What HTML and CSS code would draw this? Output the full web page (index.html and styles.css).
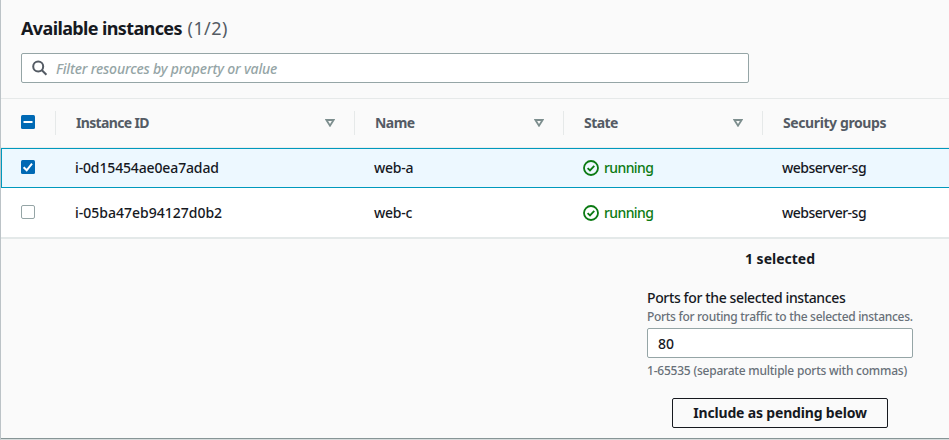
FILE: index.html
```html
<!DOCTYPE html>
<html lang="en">
<head>
<meta charset="utf-8">
<title>Available instances</title>
<link rel="stylesheet" href="styles.css">
</head>
<body>
<main class="panel">
  <header class="panel-header">
    <h2 class="title"><span class="title-text">Available instances</span> <span class="count">(1/2)</span></h2>
    <div class="filter">
      <svg class="search-icon" viewBox="0 0 16 16"><circle cx="6.2" cy="6.6" r="5"/><path d="M9.9 10.3 14.4 14.8"/></svg>
      <span class="placeholder">Filter resources by property or value</span>
    </div>
  </header>
  <section class="table">
    <div class="row head">
      <div class="cell check"><svg class="box" viewBox="0 0 14 14"><rect class="on" width="14" height="14" rx="1.5"/><path class="mark" d="M2.5 7h9"/></svg></div>
      <div class="cell"><span class="label id-label">Instance ID</span><svg class="sort" viewBox="0 0 10 8"><path d="M1.4 1h7.2L5 6.7z"/></svg></div>
      <div class="cell"><span class="label">Name</span><svg class="sort" viewBox="0 0 10 8"><path d="M1.4 1h7.2L5 6.7z"/></svg></div>
      <div class="cell"><span class="label">State</span><svg class="sort" viewBox="0 0 10 8"><path d="M1.4 1h7.2L5 6.7z"/></svg></div>
      <div class="cell"><span class="label sg-label">Security groups</span></div>
    </div>
    <div class="row selected">
      <div class="cell check"><svg class="box" viewBox="0 0 14 14"><rect class="on" width="14" height="14" rx="1.5"/><path class="mark" d="M2.6 7.2 5.7 10.3 11 3.6"/></svg></div>
      <div class="cell"><span class="id">i-0d15454ae0ea7adad</span></div>
      <div class="cell"><span class="name">web-a</span></div>
      <div class="cell status"><svg class="ok" viewBox="0 0 16 16"><circle cx="8" cy="8" r="7"/><path d="m4.6 8.1 2.4 2.3 4.3-4.5"/></svg><span class="running">running</span></div>
      <div class="cell"><span class="sg">webserver-sg</span></div>
    </div>
    <div class="row last">
      <div class="cell check"><svg class="box" viewBox="0 0 14 14"><rect class="off" x=".5" y=".5" width="13" height="13" rx="1.5"/></svg></div>
      <div class="cell"><span class="id id-wide">i-05ba47eb94127d0b2</span></div>
      <div class="cell"><span class="name">web-c</span></div>
      <div class="cell status"><svg class="ok" viewBox="0 0 16 16"><circle cx="8" cy="8" r="7"/><path d="m4.6 8.1 2.4 2.3 4.3-4.5"/></svg><span class="running">running</span></div>
      <div class="cell"><span class="sg">webserver-sg</span></div>
    </div>
  </section>
  <footer class="footer">
    <div class="form">
      <div class="selected-count">1 selected</div>
      <div class="field-label">Ports for the selected instances</div>
      <div class="hint">Ports for routing traffic to the selected instances.</div>
      <div class="input"><span>80</span></div>
      <div class="constraint">1-65535 (separate multiple ports with commas)</div>
      <button class="button">Include as pending below</button>
    </div>
  </footer>
</main>
</body>
</html>
```
FILE: styles.css
```css
* { box-sizing: border-box; }
body {
  margin: 0;
  width: 949px;
  height: 440px;
  overflow: hidden;
  font: 500 14px/20px "Noto Sans", "Open Sans", sans-serif;
  color: #16191f;
  background: #fafafa;
}
svg { display: block; flex: none; fill: none; }
span, .selected-count, .field-label, .hint, .constraint { white-space: nowrap; }
.panel {
  height: 440px;
  display: flex;
  flex-direction: column;
  border-left: 1px solid #bcc3c7;
  border-bottom: 1px solid #d5dbdb;
}
.panel-header { height: 99px; padding: 16px 20px 0; border-bottom: 1px solid #e6e9e9; }
.title { margin: 0 0 13px; font-size: 18px; line-height: 24px; font-weight: 700; }
.title-text { letter-spacing: -0.62px; }
.count { margin-left: 1px; font-weight: 400; letter-spacing: 0.4px; color: #545b64; }
.filter {
  width: 728px;
  height: 30px;
  display: flex;
  align-items: center;
  padding-left: 10px;
  background: #fff;
  border: 1px solid #95a5a6;
  border-radius: 2px;
}
.search-icon { width: 16px; height: 16px; stroke: #545b64; stroke-width: 2; }
.placeholder { margin: 2px 0 0 8px; font-style: italic; color: #95a5a6; letter-spacing: -0.17px; }
.table { height: 140px; }
.row { display: grid; grid-template-columns: 54px 299px 209px 199px 1fr; align-items: center; }
.cell { display: flex; align-items: center; padding-left: 20px; }
.check { padding: 0 0 2px 20px; }
.head { height: 49px; color: #545b64; font-weight: 700; border-bottom: 1px solid #eaeded; }
.head .cell { height: 24px; padding-left: 20px; border-left: 1px solid #e6e9e9; }
.head .check { border-left: 0; }
.label { letter-spacing: -0.55px; }
.id-label { letter-spacing: -0.65px; }
.sg-label { letter-spacing: -0.4px; }
.sort { width: 10px; height: 8px; margin: 0 19px 0 auto; stroke: #7d8e8e; stroke-width: 1.8; }
.box { width: 14px; height: 14px; }
.on { fill: #0069b4; }
.off { fill: #fff; stroke: #95a5a6; }
.mark { stroke: #fff; stroke-width: 2; }
.selected {
  height: 40px;
  background: #edf8ff;
  border: 1px solid #0099bd;
  border-right: 0;
  grid-template-columns: 53px 299px 209px 199px 1fr;
}
.selected .check { padding-left: 20px; margin-left: -1px; }
.last { height: 51px; background: #fff; border-bottom: 2px solid #e4e9e9; }
.id { letter-spacing: -0.14px; }
.id-wide { letter-spacing: 0; }
.name { letter-spacing: -0.25px; }
.sg { letter-spacing: -0.5px; }
.status { color: #0b7a13; }
.running { letter-spacing: -0.6px; }
.ok { width: 16px; height: 16px; margin-right: 5px; stroke: #0b7a13; stroke-width: 1.8; }
.footer { flex: 1; display: flex; justify-content: flex-end; padding-right: 36px; border-bottom: 1px solid #879596; }
.form { width: 266px; display: flex; flex-direction: column; padding-top: 10px; }
.selected-count { align-self: center; font-weight: 700; }
.field-label { margin-top: 19px; letter-spacing: -0.37px; }
.hint, .constraint { font-size: 12px; line-height: 16px; color: #687078; }
.hint { margin-top: 1px; letter-spacing: -0.3px; }
.constraint { letter-spacing: -0.22px; }
.input {
  height: 30px;
  display: flex;
  align-items: center;
  margin: 3px 0 5px;
  padding: 1px 0 0 10px;
  background: #fff;
  border: 1px solid #95a5a6;
  border-radius: 2px;
}
.button {
  align-self: center;
  width: 216px;
  height: 30px;
  margin-top: 19px;
  padding: 0;
  background: #fafafa;
  border: 1px solid #16191f;
  border-radius: 2px;
  color: #16191f;
  font: 700 14px/20px "Noto Sans", sans-serif;
  letter-spacing: -0.17px;
}
```
